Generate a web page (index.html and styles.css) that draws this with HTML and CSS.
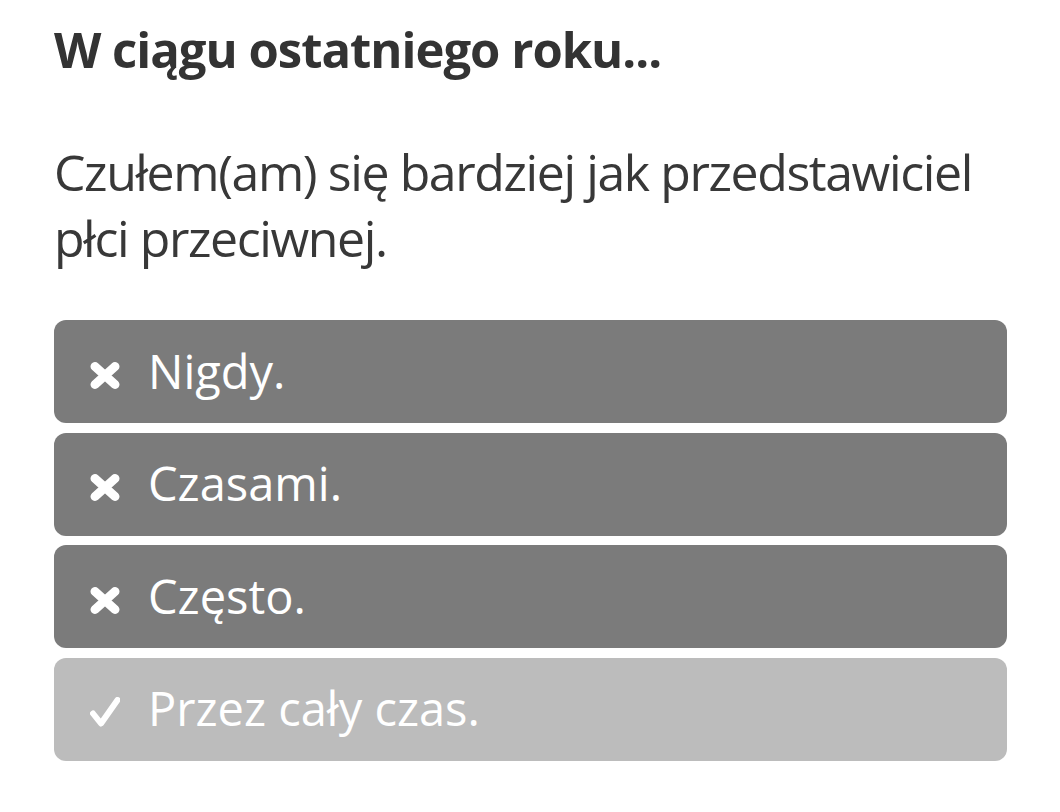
FILE: index.html
```html
<!DOCTYPE html>
<html lang="pl">
<head>
<meta charset="utf-8">
<link rel="stylesheet" href="styles.css">
</head>
<body>
<main class="quiz">
  <h1 class="title">W ciągu ostatniego roku...</h1>
  <p class="question">Czułem(am) się bardziej jak przedstawiciel płci przeciwnej.</p>
  <div class="options">
    <div class="option wrong">
      <svg class="icon x" viewBox="0 0 30 27"><path d="M5 4.5 L25 22.5 M25 4.5 L5 22.5" stroke="#fff" stroke-width="9" stroke-linecap="round"/></svg>
      <span class="label">Nigdy.</span>
    </div>
    <div class="option wrong">
      <svg class="icon x" viewBox="0 0 30 27"><path d="M5 4.5 L25 22.5 M25 4.5 L5 22.5" stroke="#fff" stroke-width="9" stroke-linecap="round"/></svg>
      <span class="label">Czasami.</span>
    </div>
    <div class="option wrong">
      <svg class="icon x" viewBox="0 0 30 27"><path d="M5 4.5 L25 22.5 M25 4.5 L5 22.5" stroke="#fff" stroke-width="9" stroke-linecap="round"/></svg>
      <span class="label">Często.</span>
    </div>
    <div class="option right">
      <svg class="icon check" viewBox="0 0 30 30"><path d="M3 16.5 L11 26.5 L27.5 3" fill="none" stroke="#fff" stroke-width="6" stroke-linecap="round" stroke-linejoin="round"/></svg>
      <span class="label">Przez cały czas.</span>
    </div>
  </div>
</main>
</body>
</html>
```

FILE: styles.css
```css
html, body {
  margin: 0;
  padding: 0;
  background: #fff;
}

.quiz {
  padding: 0 53px 0 54px;
  font-family: "Open Sans", "Noto Sans", sans-serif;
}

.title {
  margin: 0;
  padding-top: 17px;
  font-size: 49px;
  line-height: 64px;
  font-weight: 700;
  letter-spacing: -1px;
  color: #333;
}

.question {
  margin: 0;
  padding-top: 58px;
  font-size: 50px;
  line-height: 66px;
  font-weight: 400;
  letter-spacing: -1.4px;
  color: #383838;
}

.options {
  margin-top: 49px;
  display: flex;
  flex-direction: column;
  gap: 9.5px;
}

.option {
  height: 103px;
  border-radius: 12px;
  display: flex;
  align-items: center;
  padding-left: 36px;
  color: #fff;
  box-sizing: border-box;
}

.wrong {
  background: #7b7b7b;
}

.right {
  background: #bcbcbc;
}

.icon {
  flex: none;
  width: 30px;
  margin-right: 28px;
}

.x {
  height: 27px;
  margin-top: 7px;
}

.check {
  height: 30px;
  margin-top: 5px;
}

.label {
  font-size: 47px;
  line-height: 60px;
  font-weight: 400;
  margin-bottom: 2px;
}
```
